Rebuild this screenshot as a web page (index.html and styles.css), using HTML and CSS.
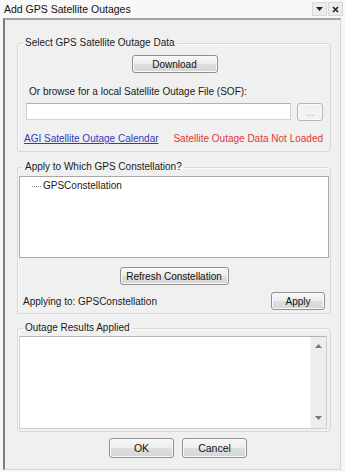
FILE: index.html
```html
<!DOCTYPE html>
<html lang="en">
<head>
    <meta charset="UTF-8">
    <title>Add GPS Satellite Outages</title>
    <link rel="stylesheet" href="styles.css">
</head>
<body>
    <div class="titlebar">
        <span class="title">Add GPS Satellite Outages</span>
        <span class="tb-btn">
            <svg width="7" height="4" viewBox="0 0 7 4"><path d="M0 0h7L3.5 4z" fill="#222"/></svg>
        </span>
        <span class="tb-btn">
            <svg width="7" height="7" viewBox="0 0 7 7"><path d="M1 1l5 5M6 1l-5 5" stroke="#222" stroke-width="1.6"/></svg>
        </span>
    </div>

    <div class="window">
        <fieldset class="group">
            <legend>Select GPS Satellite Outage Data</legend>
            <div class="select-body">
                <div class="center-row">
                    <button class="btn btn-download">Download</button>
                </div>
                <div class="hint">Or browse for a local Satellite Outage File (SOF):</div>
                <div class="file-row">
                    <input type="text" class="file-input">
                    <button class="btn btn-browse" disabled>...</button>
                </div>
                <div class="status-row">
                    <a href="#" class="link">AGI Satellite Outage Calendar</a>
                    <span class="status">Satellite Outage Data Not Loaded</span>
                </div>
            </div>
        </fieldset>

        <fieldset class="group group-constellation">
            <legend>Apply to Which GPS Constellation?</legend>
            <div class="tree">
                <div class="tree-item">
                    <span class="tree-line"></span>
                    <span>GPSConstellation</span>
                </div>
            </div>
            <div class="center-row refresh-row">
                <button class="btn btn-refresh">Refresh Constellation</button>
            </div>
            <div class="apply-row">
                <span>Applying to: GPSConstellation</span>
                <button class="btn btn-apply">Apply</button>
            </div>
        </fieldset>

        <fieldset class="group group-results">
            <legend>Outage Results Applied</legend>
            <div class="results">
                <div class="results-text"></div>
                <div class="scrollbar">
                    <svg width="7" height="4" viewBox="0 0 7 4"><path d="M0 4h7L3.5 0z" fill="#777"/></svg>
                    <svg width="7" height="4" viewBox="0 0 7 4"><path d="M0 0h7L3.5 4z" fill="#777"/></svg>
                </div>
            </div>
        </fieldset>

        <div class="dialog-buttons">
            <button class="btn btn-dialog">OK</button>
            <button class="btn btn-dialog">Cancel</button>
        </div>
    </div>
</body>
</html>
```

FILE: styles.css
```css
body {
    margin: 0;
    width: 345px;
    height: 472px;
    overflow: hidden;
    background: #f6f6f6;
    font-family: "Liberation Sans", Arial, sans-serif;
    font-size: 10px;
    color: #1a1a1a;
}

.titlebar {
    height: 18px;
    display: flex;
    align-items: center;
    padding: 0 2px 0 4px;
    background: #f8f8f8;
}

.title {
    flex: 1;
    font-size: 10.5px;
    color: #111;
}

.tb-btn {
    width: 13px;
    height: 12px;
    margin-left: 1px;
    display: flex;
    align-items: center;
    justify-content: center;
    border: 1px solid #d8d8d8;
    background: #ececec;
}

.window {
    margin-left: 3px;
    width: 338px;
    box-sizing: border-box;
    border-left: 2px solid #7d7d7d;
    border-top: 2px solid #a3a3a3;
    border-right: 1px solid #d6d6d6;
    border-bottom: 1px solid #d6d6d6;
    padding: 17px 9px 11px 12px;
    background: #f0f0f0;
}

/* group boxes */
.group {
    width: 314px;
    box-sizing: border-box;
    margin: 0;
    min-width: 0;
    padding: 0;
    border: 1px solid #d9d9d9;
    border-radius: 3px;
    box-shadow: inset 1px 1px 0 #fafafa;
}

.group + .group { margin-top: 9px; }
.group-results { margin-top: 8px !important; }

legend {
    margin-left: 5px;
    padding: 0 2px;
    line-height: 12px;
    color: #1a1a1a;
}

.select-body {
    padding: 6px 7px 6px 8px;
}

.center-row {
    display: flex;
    justify-content: center;
}

.btn {
    font: inherit;
    color: #111;
    height: 18px;
    padding: 0;
    border: 1px solid #8f8f8f;
    border-radius: 3px;
    background: linear-gradient(#f7f7f7, #ededed 50%, #dedede 51%, #d6d6d6);
    box-shadow: inset 0 0 0 1px #fbfbfb;
}

.btn-download { width: 86px; }
.btn-refresh { width: 109px; }
.btn-apply { width: 54px; }

.btn-browse {
    width: 26px;
    color: #a8a8a8;
    border-color: #b4b4b4;
    background: #f2f2f2;
}

.hint {
    margin-top: 13px;
    line-height: 12px;
    padding-left: 3px;
}

.file-row {
    margin-top: 5px;
    display: flex;
    align-items: flex-start;
    gap: 6px;
}

.file-input {
    width: 265px;
    height: 17px;
    box-sizing: border-box;
    margin: 0;
    border: 1px solid #d2d2d2;
    border-top-color: #b0b0b0;
    background: #fff;
}

.status-row {
    margin-top: 12px;
    margin-left: -2px;
    line-height: 12px;
    display: flex;
    justify-content: space-between;
}

.link { color: #3337c0; }
.status { color: #e2353a; }

/* constellation tree */
.tree {
    margin: 3px 1px 0;
    height: 82px;
    box-sizing: border-box;
    border: 1px solid #a8a8a8;
    background: #fff;
    padding: 3px 0 0 12px;
}

.tree-item {
    display: flex;
    align-items: center;
    line-height: 12px;
    gap: 2px;
}

.tree-line {
    width: 9px;
    border-top: 1px dotted #8a8a8a;
}

.refresh-row { margin-top: 9px; }

.apply-row {
    margin-top: 7px;
    padding: 0 5px 3px;
    display: flex;
    justify-content: space-between;
    align-items: center;
}

/* results box */
.results {
    margin: 2px 3px 2px 1px;
    height: 93px;
    box-sizing: border-box;
    display: flex;
    border: 1px solid #cfcfcf;
    border-top-color: #b5b5b5;
    background: #fff;
}

.results-text { flex: 1; }

.scrollbar {
    width: 15px;
    background: #ededed;
    border-left: 1px solid #f6f6f6;
    display: flex;
    flex-direction: column;
    justify-content: space-between;
    align-items: center;
    padding: 7px 0 8px;
}

.dialog-buttons {
    margin-top: 6px;
    padding-left: 8px;
    display: flex;
    justify-content: center;
    gap: 8px;
}

.btn-dialog {
    width: 65px;
    height: 20px;
    font-size: 10.5px;
}
```
